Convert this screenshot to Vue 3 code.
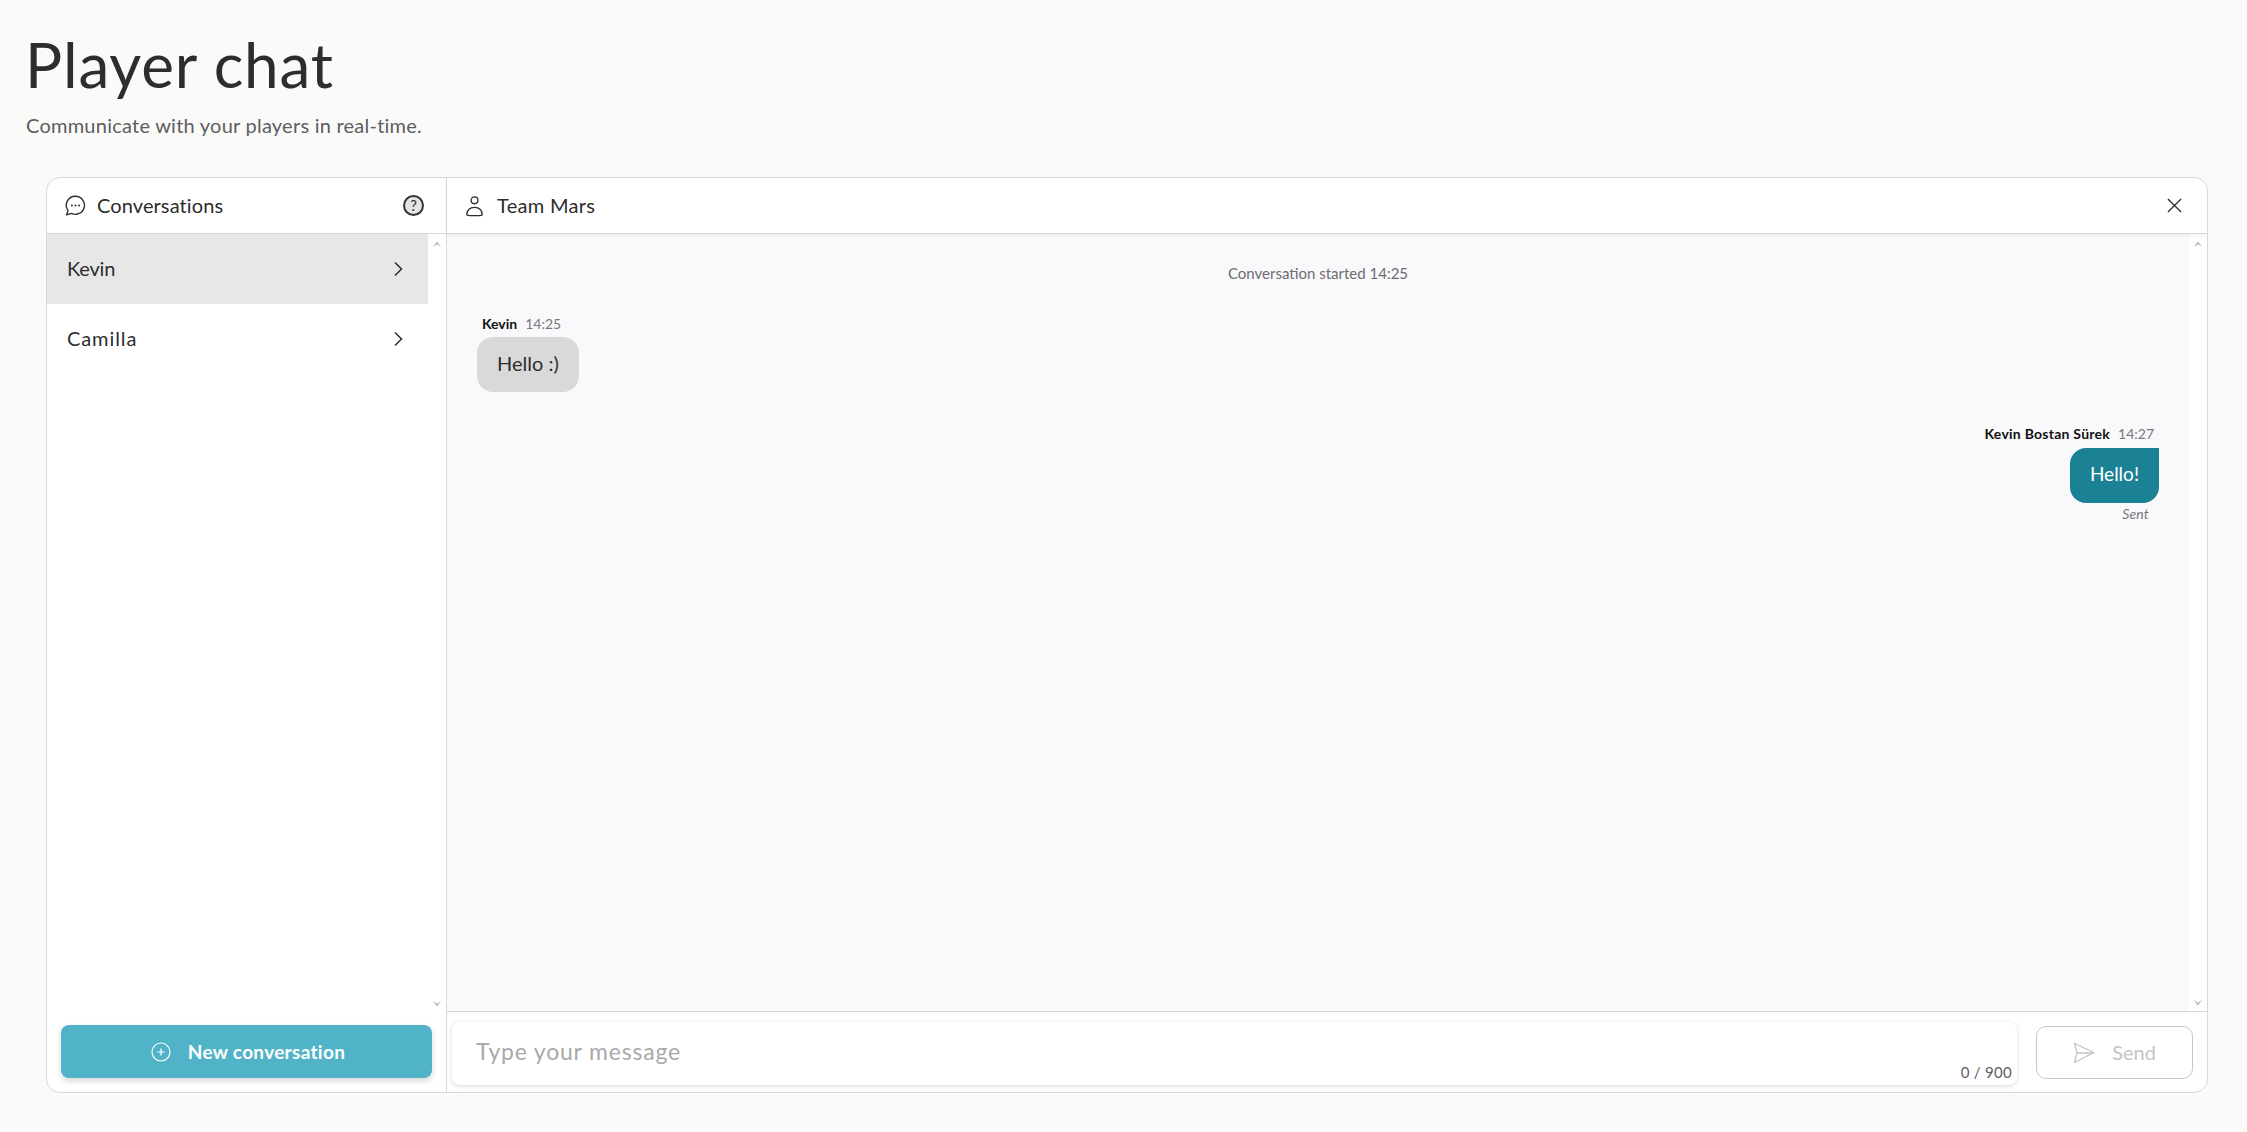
<script setup>
const rows = [
  { name: 'Kevin', active: true, spacing: 'tight' },
  { name: 'Camilla', active: false, spacing: 'wide' },
]
</script>

<template>
  <div class="page">
    <header class="head">
      <h1>Player chat</h1>
      <p>Communicate with your players in real-time.</p>
    </header>
    <main class="panel">
      <aside class="side">
        <div class="bar">
          <svg class="ic-chat" viewBox="0 0 20 20" fill="none" stroke="currentColor" stroke-width="1.3">
            <path d="M10 1.200a8.600 8.600 0 1 1-3.900 16.300L1.500 19l1.400-4.100A8.600 8.600 0 0 1 10 1.200z" stroke-linejoin="round"/>
            <circle cx="6.600" cy="10" r=".9" fill="currentColor" stroke="none"/>
            <circle cx="10" cy="10" r=".9" fill="currentColor" stroke="none"/>
            <circle cx="13.400" cy="10" r=".9" fill="currentColor" stroke="none"/>
          </svg>
          <span class="bar-title conv">Conversations</span>
          <span class="help">?</span>
        </div>
        <div class="list-wrap">
          <ul class="list">
            <li v-for="r in rows" :key="r.name" class="row" :class="[r.spacing, { active: r.active }]">
              <span class="row-name">{{ r.name }}</span>
              <svg class="chev" viewBox="0 0 10 16" fill="none" stroke="currentColor" stroke-width="1.5">
                <path d="M2 1.500 8.500 8 2 14.500"/>
              </svg>
            </li>
          </ul>
          <div class="sb">
            <svg viewBox="0 0 10 7"><path d="M.5 6 5 .5 9.500 6 5 3.500z"/></svg>
            <svg viewBox="0 0 10 7"><path d="M.5 1 5 6.500 9.500 1 5 3.500z"/></svg>
          </div>
        </div>
        <div class="new-wrap">
          <button class="new">
            <svg viewBox="0 0 20 20" fill="none" stroke="currentColor" stroke-width="1.200">
              <circle cx="10" cy="10" r="9"/>
              <path d="M10 6.500v7M6.500 10h7"/>
            </svg>
            New conversation
          </button>
        </div>
      </aside>
      <section class="main">
        <div class="bar top">
          <svg class="ic-user" viewBox="0 0 20 22" fill="none" stroke="currentColor" stroke-width="1.400">
            <circle cx="10" cy="5" r="3.600"/>
            <path d="M2 20.500c-.5-5 3-8 8-8s8.500 3 8 8c-3 .8-13 .8-16 0z" stroke-linejoin="round"/>
          </svg>
          <span class="bar-title team">Team Mars</span>
          <svg class="ic-x" viewBox="0 0 16 16" fill="none" stroke="currentColor" stroke-width="1.400">
            <path d="M1 1l14 14M15 1 1 15"/>
          </svg>
        </div>
        <div class="view">
          <div class="msgs">
            <div class="sys">Conversation started 14:25</div>
            <div class="msg">
              <div class="meta"><b>Kevin</b><span>14:25</span></div>
              <div class="bub">Hello :)</div>
            </div>
            <div class="msg mine">
              <div class="meta"><b>Kevin Bostan Sürek</b><span>14:27</span></div>
              <div class="bub">Hello!</div>
              <div class="sent">Sent</div>
            </div>
          </div>
          <div class="sb">
            <svg viewBox="0 0 10 7"><path d="M.5 6 5 .5 9.500 6 5 3.500z"/></svg>
            <svg viewBox="0 0 10 7"><path d="M.5 1 5 6.500 9.500 1 5 3.500z"/></svg>
          </div>
        </div>
        <div class="foot">
          <div class="field">
            <input class="inp" type="text" placeholder="Type your message" />
            <span class="count">0 / 900</span>
          </div>
          <button class="send" disabled>
            <svg viewBox="0 0 22 22" fill="none" stroke="currentColor" stroke-width="1.300" stroke-linejoin="round">
              <path d="M1.500 1.500 21 10.500 1.500 20.500 4 11z"/>
              <path d="M4 11h17"/>
            </svg>
            Send
          </button>
        </div>
      </section>
    </main>
  </div>
</template>

<style>
html, body { margin: 0; background: #fafaf8; }
</style>

<style scoped>
.page {
  box-sizing: border-box;
  height: 1132px;
  padding: 27px 39px 0 46px;
  font-family: Lato, "Open Sans", sans-serif;
  color: #2d2d2d;
  background: #fafaf8;
  overflow: hidden;
}
.head { margin-left: -20px; height: 150px; }
h1 {
  margin: 0 0 0 -1px;
  font-size: 62px;
  line-height: 74px;
  font-weight: 400;
  letter-spacing: .85px;
}
p {
  margin: 12px 0 0;
  font-size: 20px;
  line-height: 24px;
  color: #5d5d62;
  letter-spacing: .24px;
}
.panel {
  display: grid;
  grid-template-columns: 400px 1fr;
  height: 916px;
  box-sizing: border-box;
  background: #fff;
  border: 1px solid #d9d9d9;
  border-radius: 14px;
  overflow: hidden;
}
.side {
  display: flex;
  flex-direction: column;
  border-right: 1px solid #d9d9d9;
  min-height: 0;
}
.bar {
  flex: 0 0 56px;
  display: flex;
  align-items: center;
  box-sizing: border-box;
  border-bottom: 1px solid #d9d9d9;
  padding: 0 22px 0 18px;
}
.top { padding: 0 25px 0 18px; position: relative; box-shadow: 0 2px 4px rgba(0,0,0,.06); }
.bar-title { font-size: 20px; margin-left: 12px; padding-bottom: 2px; flex: 1; color: #2d2d2d; }
.conv { letter-spacing: .1px; margin-left: 11px; }
.team { letter-spacing: .3px; margin-left: 13px; }
.ic-chat { width: 21px; height: 21px; }
.ic-user { width: 19px; height: 22px; }
.ic-x { width: 15px; height: 15px; }
.help {
  box-sizing: border-box;
  width: 21px; height: 21px;
  border: 2px solid #333;
  border-radius: 50%;
  background: #e4e4e4;
  font-size: 15px;
  line-height: 17px;
  text-align: center;
}
.list-wrap { flex: 1; display: flex; min-height: 0; }
.list { flex: 1; margin: 0; padding: 0; list-style: none; }
.row {
  height: 70px;
  display: flex;
  align-items: center;
  justify-content: space-between;
  padding: 0 25px 0 20px;
  font-size: 20px;
}
.row-name { padding-bottom: 2px; }
.tight { letter-spacing: -.2px; }
.wide { letter-spacing: .9px; }
.row.active { background: #e7e7e7; }
.chev { width: 10px; height: 16px; }
.sb {
  flex: 0 0 18px;
  display: flex;
  flex-direction: column;
  justify-content: space-between;
  align-items: center;
  padding: 7px 0 5px;
  box-sizing: border-box;
  background: #fff;
}
.sb svg { width: 10px; height: 7px; fill: #bdbdbd; }
.new-wrap { flex: 0 0 80px; box-sizing: border-box; padding: 13px 14px 0; }
.new {
  width: 100%;
  height: 53px;
  border: 0;
  border-radius: 8px;
  background: #50b3c8;
  color: #fff;
  font: 700 19px Lato, sans-serif;
  letter-spacing: .3px;
  display: flex;
  align-items: center;
  justify-content: center;
  gap: 17px;
  padding: 0 0 0 3px;
  box-shadow: 0 3px 6px rgba(0,0,0,.16);
}
.new svg { width: 20px; height: 20px; }
.main { display: flex; flex-direction: column; min-width: 0; min-height: 0; }
.view { flex: 1; display: flex; min-height: 0; }
.msgs {
  flex: 1;
  background: #f9f9fb;
  padding: 27px 30px 0;
  display: flex;
  flex-direction: column;
}
.sys { text-align: center; font-size: 15px; line-height: 24px; color: #6c6c70; margin-bottom: 29px; }
.msg { display: flex; flex-direction: column; align-items: flex-start; margin-bottom: 32px; }
.mine { align-items: flex-end; }
.meta {
  font-size: 14px;
  line-height: 20px;
  height: 20px;
  margin: 0 5px 3px;
  display: flex;
  gap: 8px;
  color: #77777c;
}
.meta b { font-weight: 700; color: #111; }
.mine .meta { margin-bottom: 4px; }
.mine .meta b { letter-spacing: .25px; }
.bub {
  box-sizing: border-box;
  height: 55px;
  line-height: 52px;
  padding: 0 20px;
  font-size: 20px;
  background: #d9d9d9;
  border-radius: 16px;
}
.mine .bub { background: #1b8195; color: #fff; border-radius: 16px 0 16px 16px; padding: 0 20px; font-size: 19px; }
.sent { font-style: italic; font-size: 14px; line-height: 22px; color: #77777c; margin-right: 10px; letter-spacing: .2px; }
.foot {
  flex: 0 0 81px;
  box-sizing: border-box;
  border-top: 1px solid #d9d9d9;
  display: flex;
  align-items: flex-start;
  padding: 10px 14px 0 5px;
  gap: 19px;
}
.field {
  flex: 1;
  height: 63px;
  position: relative;
  background: #fff;
  border-radius: 8px;
  box-shadow: 0 1px 4px rgba(0,0,0,.16);
}
.inp {
  box-sizing: border-box;
  width: 100%;
  height: 100%;
  border: 0;
  outline: 0;
  background: transparent;
  padding: 0 24px 6px;
  font: 400 23px Lato, sans-serif;
  letter-spacing: .8px;
}
.inp::placeholder { color: #a9a9a9; opacity: 1; }
.count { position: absolute; right: 5px; bottom: 4px; font-size: 15px; line-height: 18px; color: #5d5d62; letter-spacing: .3px; }
.send {
  flex: 0 0 157px;
  height: 53px;
  margin-top: 4px;
  box-sizing: border-box;
  border: 1.5px solid #c8c8c8;
  border-radius: 10px;
  background: #fff;
  color: #c4c4c4;
  font: 400 20px Lato, sans-serif;
  display: flex;
  align-items: center;
  justify-content: center;
  gap: 17px;
  padding-bottom: 3px;
}
.send svg { width: 22px; height: 22px; margin-top: 3px; }
</style>
